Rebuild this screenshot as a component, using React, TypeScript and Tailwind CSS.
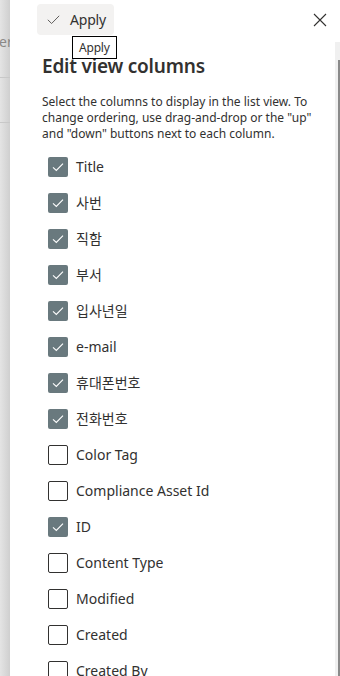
import React from "react";

const items: [string, boolean][] = [
  ["Title", true],
  ["사번", true],
  ["직함", true],
  ["부서", true],
  ["입사년일", true],
  ["e-mail", true],
  ["휴대폰번호", true],
  ["전화번호", true],
  ["Color Tag", false],
  ["Compliance Asset Id", false],
  ["ID", true],
  ["Content Type", false],
  ["Modified", false],
  ["Created", false],
  ["Created By", false],
];

function Check() {
  return (
    <svg width="12" height="12" viewBox="0 0 12 12" fill="none">
      <path d="M1 6.4 L4.3 9.4 L11 2.6" stroke="white" strokeWidth="1.1" />
    </svg>
  );
}

export default function App() {
  return (
    <div
      className="relative flex w-[340px] h-[676px] overflow-hidden bg-white text-[#323130]"
      style={{ fontFamily: '"Noto Sans", "Noto Sans CJK KR", sans-serif' }}
    >
      <div className="relative w-[10px] shrink-0 bg-gradient-to-r from-[#e4e4e4] to-[#cfcfcf]">
        <div className="pt-[32px] pl-0 text-[14px] leading-[20px] text-[#8a8886] -ml-[1px]">er</div>
        <div className="mt-[25px] h-px bg-[#c8c8c8]" />
        <div className="mt-[44px] h-px bg-[#c8c8c8]" />
      </div>
      <div className="relative flex flex-1 bg-white">
        <div className="flex-1 flex flex-col">
          <div className="flex items-start justify-between pt-[4px] pl-[27px] pr-[8px]">
            <button className="flex items-center gap-[10px] h-[31px] pl-[10px] pr-[8px] rounded-[4px] bg-[#f3f2f1] text-[14px] tracking-[-0.2px]">
              <svg width="13" height="13" viewBox="0 0 13 13" fill="none">
                <path d="M0.8 6.8 L4.6 10.5 L12.2 2.8" stroke="#605e5c" strokeWidth="1" />
              </svg>
              <span>Apply</span>
            </button>
            <svg width="14" height="14" viewBox="0 0 14 14" className="mt-[9px]" fill="none">
              <path d="M1 1 L13 13 M13 1 L1 13" stroke="#323130" strokeWidth="1.1" />
            </svg>
          </div>
          <div className="absolute left-[62px] top-[36px] border border-black bg-white px-[6px] h-[23px] flex items-center text-[12px] tracking-[-0.2px] z-10">
            Apply
          </div>
          <div className="pl-[32px] pr-[20px]">
            <h1 className="mt-[24px] text-[19px] leading-[14px] font-semibold tracking-[-0.2px]">Edit view columns</h1>
            <p className="mt-[21px] text-[12px] leading-[16px]">
              Select the columns to display in the list view. To change ordering, use drag-and-drop or the "up" and "down" buttons next to each column.
            </p>
            <div className="mt-[7px] pl-[6px] flex flex-col">
              {items.map(([label, checked]) => (
                <div key={label} className="flex items-center h-[36px] gap-[8px]">
                  {checked ? (
                    <div className="w-[20px] h-[20px] rounded-[2px] bg-[#69797e] flex items-center justify-center">
                      <Check />
                    </div>
                  ) : (
                    <div className="w-[20px] h-[20px] rounded-[2px] border border-[#323130] bg-white" />
                  )}
                  <span className="text-[14px] leading-[20px]">{label}</span>
                </div>
              ))}
            </div>
          </div>
        </div>
        <div className="w-[5px] mt-[42px] bg-[#f0f0f0] flex">
          <div className="ml-[3px] mt-[18px] w-[2px] flex-1 bg-[#8a8a8a]" />
        </div>
      </div>
    </div>
  );
}
